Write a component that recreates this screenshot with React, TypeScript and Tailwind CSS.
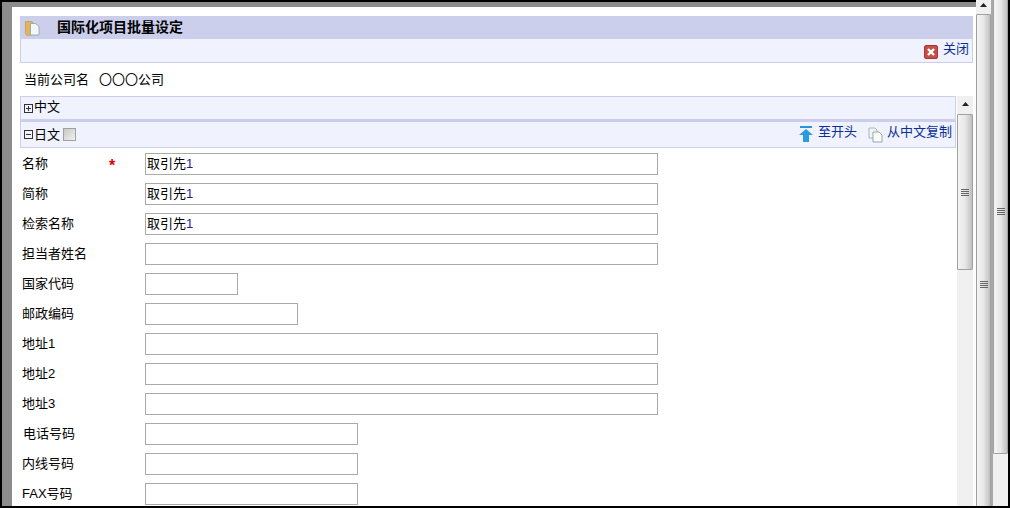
const FONT = "font-['Liberation_Sans','Noto_Sans_CJK_SC',sans-serif]";

function Grip() {
  return (
    <div className="flex flex-col gap-[1px] items-center">
      <div className="h-[1px] w-[8px] bg-[#666]" />
      <div className="h-[1px] w-[8px] bg-[#666]" />
      <div className="h-[1px] w-[8px] bg-[#666]" />
      <div className="h-[1px] w-[8px] bg-[#666]" />
    </div>
  );
}

function Arrow() {
  return (
    <svg width="7" height="4" viewBox="0 0 7 4"><path d="M3.5 0L7 4H0z" fill="#222" /></svg>
  );
}

function Track({ className, headClass, thumbClass, arrow }: { className: string; headClass: string; thumbClass: string; arrow: boolean }) {
  return (
    <div className={`flex flex-col shrink-0 overflow-hidden bg-[#f0f0f0] ${className}`}>
      <div className={`w-full flex justify-center shrink-0 ${headClass}`}>{arrow && <Arrow />}</div>
      <div className={`shrink-0 border border-[#a0a0a0] rounded-[1px] bg-gradient-to-r from-[#f4f4f4] via-[#e8e8e8] to-[#c0c0c0] flex items-center justify-center ${thumbClass}`}>
        <Grip />
      </div>
    </div>
  );
}

function Row({ label, width, value, star, indent }: { label: string; width: string; value?: string; star?: boolean; indent?: boolean }) {
  return (
    <div className="flex items-start h-[30px] shrink-0">
      <div className={`w-[87px] h-[22px] text-[13px] leading-[21px] text-black ${indent ? "pl-[3px]" : "pl-[2px]"} shrink-0`}>{label}</div>
      <div className="w-[38px] shrink-0 text-[#e00000] font-bold text-[16px] leading-[26px] pl-[2px]">{star ? "*" : ""}</div>
      <div className={`h-[22px] border border-[#aaaaaa] bg-white text-[13px] leading-[19px] pl-[1px] text-black ${width}`}>
        {value && <>{value}<span className="text-[#2a1a90]">1</span></>}
      </div>
    </div>
  );
}

export default function App() {
  return (
    <div className={`w-[1010px] h-[508px] bg-black overflow-hidden flex ${FONT}`}>
      <div className="w-[976px] h-full shrink-0 pl-[2px] pt-[2px] pb-[2px]">
        <div className="w-full h-full bg-[#8c8c8c] pl-[10px] pt-[5px]">
          <div className="w-full h-full bg-white pl-[8px] pt-[9px] flex flex-col">
            <div className="w-[953px] h-[23px] bg-[#cbcfec] flex items-center pl-[5px] shrink-0">
              <svg width="15" height="16" viewBox="0 0 15 16">
                <path d="M0.5 1.5h6l1.500 1v12l-6 1-1.500-2z" fill="#e3b45c" stroke="#c29a50" strokeWidth="0.8" />
                <path d="M5.500 3.500h5l3.500 3v8.500h-8.500z" fill="#f2f7f7" stroke="#8aa3a8" strokeWidth="0.8" />
              </svg>
              <span className="ml-[17px] text-[14px] leading-[20px] font-bold text-black mb-[2px]">国际化项目批量设定</span>
            </div>
            <div className="w-[953px] h-[24px] bg-[#f0f2fd] border-b border-x border-[#cbcfec] flex items-center justify-end pr-[3px] shrink-0">
              <svg width="14" height="14" viewBox="0 0 14 14" className="mr-[5px] mt-[2px]">
                <rect x="0.5" y="0.5" width="13" height="13" rx="1.500" fill="#c4504a" stroke="#a33" />
                <path d="M4 4l6 6M10 4l-6 6" stroke="#fff" strokeWidth="2.400" />
              </svg>
              <span className="text-[13px] leading-[18px] text-[#0a2f96] mb-[4px]">关闭</span>
            </div>
            <div className="h-[33px] pl-[4px] flex items-center text-[13px] text-black shrink-0">
              <span className="mr-[10px]">当前公司名</span><span>〇〇〇公司</span>
            </div>
            <div className="flex flex-1 min-h-0 overflow-hidden">
              <div className="w-[936px] shrink-0 flex flex-col mr-[1px]">
                <div className="h-[25px] shrink-0 bg-[#f0f2fd] border border-[#cbcfec] border-b-[2px] flex items-center pl-[3px] text-[13px] text-black">
                  <span className="w-[9px] h-[9px] border border-[#333] mr-[1px] flex items-center justify-center relative">
                    <span className="absolute w-[5px] h-[1px] bg-[#333]" /><span className="absolute w-[1px] h-[5px] bg-[#333]" />
                  </span>
                  <span className="mb-[2px]">中文</span>
                </div>
                <div className="h-[27px] shrink-0 bg-[#f0f2fd] border border-[#cbcfec] flex items-center pl-[3px] pr-[3px] text-[13px] text-black">
                  <span className="w-[9px] h-[9px] border border-[#333] mr-[1px] flex items-center justify-center relative">
                    <span className="absolute w-[5px] h-[1px] bg-[#333]" />
                  </span>
                  日文
                  <span className="ml-[3px] w-[13px] h-[13px] border border-[#a0a0a0] bg-gradient-to-br from-[#c8c8c8] to-[#f0f0f0] mb-[1px]" />
                  <svg width="14" height="16" viewBox="0 0 14 16" className="ml-auto mr-[5px] mt-[-1px]">
                    <rect x="1" y="0" width="12" height="2" fill="#2b93d8" />
                    <path d="M7 3l7 6h-4v7H4V9H0z" fill="#2b9be0" />
                  </svg>
                  <span className="text-[#0a2f96] mr-[11px] mb-[5px]">至开头</span>
                  <svg width="15" height="16" viewBox="0 0 15 16" className="mr-[4px] mt-[1px]">
                    <path d="M1 1h6l2 2v8H1z" fill="#f2f5f5" stroke="#a8b4b4" />
                    <path d="M5 5h6l3 3v7H5z" fill="#fafcfc" stroke="#98a6a6" />
                  </svg>
                  <span className="text-[#0a2f96] mb-[5px]">从中文复制</span>
                </div>
                <div className="pt-[5px] flex flex-col">
                  <Row label="名称" width="w-[513px]" value="取引先" star />
                  <Row label="简称" width="w-[513px]" value="取引先" />
                  <Row label="检索名称" width="w-[513px]" value="取引先" />
                  <Row label="担当者姓名" width="w-[513px]" />
                  <Row label="国家代码" width="w-[93px]" />
                  <Row label="邮政编码" width="w-[153px]" />
                  <Row label="地址1" width="w-[513px]" />
                  <Row label="地址2" width="w-[513px]" />
                  <Row label="地址3" width="w-[513px]" />
                  <Row label="电话号码" width="w-[213px]" indent />
                  <Row label="内线号码" width="w-[213px]" />
                  <Row label="FAX号码" width="w-[213px]" />
                </div>
              </div>
              <Track className="w-[16px] h-full" headClass="h-[18px] pt-[6px]" thumbClass="h-[156px]" arrow />
            </div>
          </div>
        </div>
      </div>
      <Track className="w-[17px] h-[506px] border-r-[2px] border-[#a8a8a8]" headClass="h-[14px] pt-[3px]" thumbClass="h-[540px]" arrow />
      <Track className="w-[15px] h-[506px]" headClass="h-0" thumbClass="h-[486px] -mt-[32px]" arrow={false} />
    </div>
  );
}
